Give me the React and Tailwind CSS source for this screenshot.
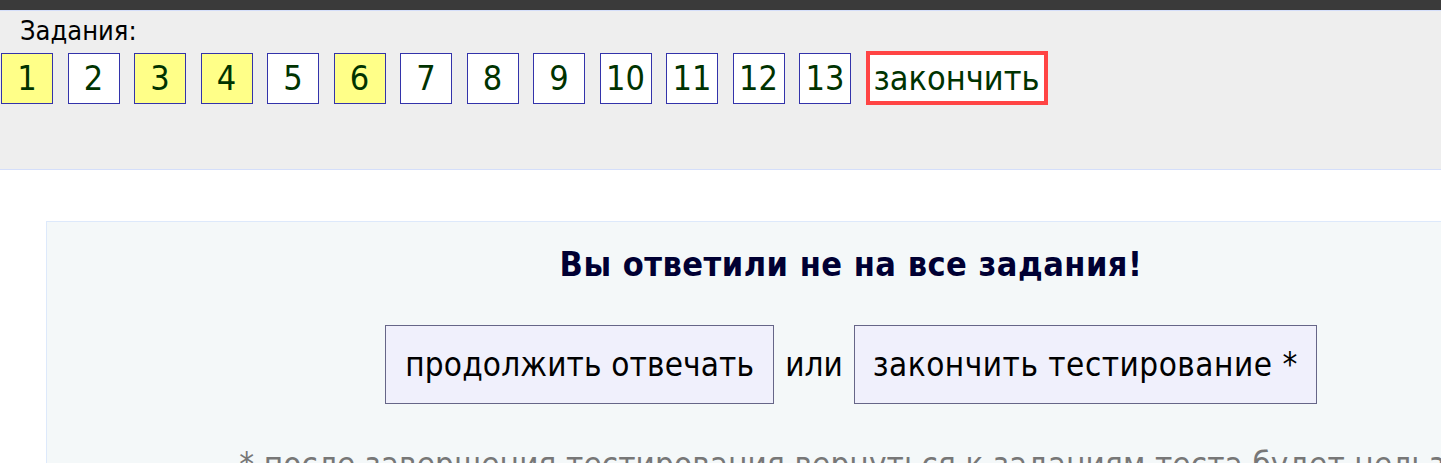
import React from "react";

const FONT = { fontFamily: '"DejaVu Sans Condensed", "DejaVu Sans", Tahoma, sans-serif', fontStretch: "condensed" };

const tasks = [
  { n: 1, done: true },
  { n: 2, done: false },
  { n: 3, done: true },
  { n: 4, done: true },
  { n: 5, done: false },
  { n: 6, done: true },
  { n: 7, done: false },
  { n: 8, done: false },
  { n: 9, done: false },
  { n: 10, done: false },
  { n: 11, done: false },
  { n: 12, done: false },
  { n: 13, done: false },
];

export default function App() {
  return (
    <div className="w-[1441px] h-[463px] overflow-hidden bg-white" style={FONT}>
      <div className="h-[10px] bg-[#3a3a3a]" />
      <div className="h-[160px] bg-[#eeeeee] border-t border-b border-[#d4defa]">
        <div className="pl-[20px] pt-[2px] text-[27px] leading-[36px] text-black">Задания:</div>
        <div className="flex items-center gap-[14.5px] pl-[1px] mt-[2px]">
          {tasks.map((t) => (
            <div
              key={t.n}
              className={`w-[52px] h-[51px] border border-[#3333aa] flex items-center justify-center text-[34px] leading-none text-[#003300] ${t.done ? "bg-[#ffff88]" : "bg-white"}`}
            >
              {t.n}
            </div>
          ))}
          <div className="w-[182px] h-[54px] border-[4px] border-[#ff4444] bg-white flex items-center justify-center text-[34px] leading-none text-[#003300]">
            закончить
          </div>
        </div>
      </div>
      <div className="pt-[51px] pl-[46px]">
        <div className="w-[1610px] h-[300px] bg-[#f4f8f9] border border-[#dde9fb] flex flex-col items-center">
          <div className="mt-[22px] text-[34px] leading-[40px] tracking-[0.5px] font-bold text-[#000033]">
            Вы ответили не на все задания!
          </div>
          <div className="mt-[41px] flex items-center gap-[11px]">
            <div className="h-[79px] px-[19px] bg-[#f0f0fc] border border-[#666688] flex items-center text-[33px] tracking-[0.15px] text-black">
              продолжить отвечать
            </div>
            <span className="text-[33px] text-black">или</span>
            <div className="h-[79px] px-[18px] bg-[#f0f0fc] border border-[#666688] flex items-center text-[33px] tracking-[0.5px] text-black">
              закончить тестирование *
            </div>
          </div>
          <div className="mt-[41px] text-[33px] leading-[40px] tracking-[0.1px] text-[#777777] whitespace-nowrap">
            * после завершения тестирования вернуться к заданиям теста будет нельзя
          </div>
        </div>
      </div>
    </div>
  );
}
